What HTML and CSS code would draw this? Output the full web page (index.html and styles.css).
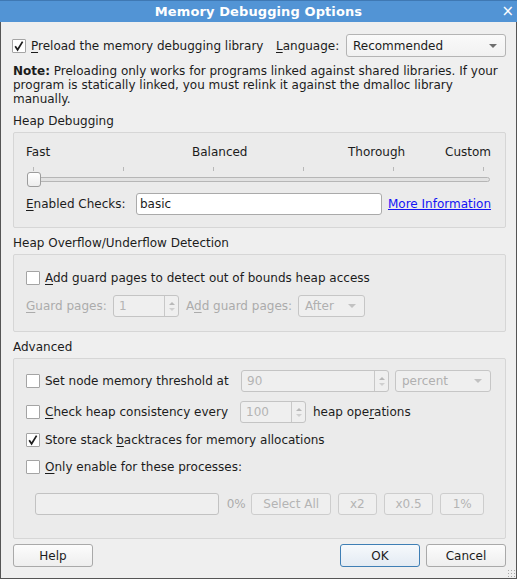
FILE: index.html
```html
<!DOCTYPE html>
<html lang="en">
<head>
    <meta charset="UTF-8">
    <title>Memory Debugging Options</title>
    <link rel="stylesheet" href="styles.css">
</head>
<body>
    <div class="titlebar">
        <span class="title">Memory Debugging Options</span>
        <span class="close">&#215;</span>
    </div>
    <div class="dialog">
        <div class="top-row">
            <span class="box checked"><svg width="12" height="12" viewBox="0 0 12 12"><path d="M2.2 6.2 L4.6 9.8 L9.6 1.6" fill="none" stroke="#1e1e1e" stroke-width="1.7"/></svg></span>
            <span class="preload-text"><u>P</u>reload the memory debugging library</span>
            <span class="lang-label"><u>L</u>anguage:</span>
            <div class="combo lang-combo"><span>Recommended</span><span class="arrow"></span></div>
        </div>

        <p class="note"><b>Note:</b> Preloading only works for programs linked against shared libraries. If your<br>program is statically linked, you must relink it against the dmalloc library<br>manually.</p>

        <div class="section-title">Heap Debugging</div>
        <div class="group heap-group">
            <div class="level-labels">
                <span class="lvl-fast">Fast</span>
                <span class="lvl-balanced">Balanced</span>
                <span class="lvl-thorough">Thorough</span>
                <span>Custom</span>
            </div>
            <div class="ticks">
                <span></span><span></span><span></span><span></span><span></span><span></span>
            </div>
            <div class="slider">
                <div class="groove"></div>
                <div class="handle"></div>
            </div>
            <div class="checks-row">
                <span class="checks-label"><u>E</u>nabled Checks:</span>
                <div class="text-input">basic</div>
                <a class="more-info" href="#">More Information</a>
            </div>
        </div>

        <div class="section-title">Heap Overflow/Underflow Detection</div>
        <div class="group guard-group">
            <div class="check-row">
                <span class="box"></span>
                <span><u>A</u>dd guard pages to detect out of bounds heap access</span>
            </div>
            <div class="guard-row disabled">
                <span class="guard-label"><u>G</u>uard pages:</span>
                <div class="spin guard-spin"><span class="val">1</span><span class="spin-btns"><i class="up"></i><i class="down"></i></span></div>
                <span class="guard-label2">A<u>d</u>d guard pages:</span>
                <div class="combo small-combo"><span>After</span><span class="arrow"></span></div>
            </div>
        </div>

        <div class="section-title">Advanced</div>
        <div class="group adv-group">
            <div class="adv-row first">
                <span class="box"></span>
                <span class="adv-label">Set node memory threshold at</span>
                <div class="spin threshold-spin disabled"><span class="val">90</span><span class="spin-btns"><i class="up"></i><i class="down"></i></span></div>
                <div class="combo unit-combo disabled"><span>percent</span><span class="arrow"></span></div>
            </div>
            <div class="adv-row second">
                <span class="box"></span>
                <span class="adv-label"><u>C</u>heck heap consistency every</span>
                <div class="spin ops-spin disabled"><span class="val">100</span><span class="spin-btns"><i class="up"></i><i class="down"></i></span></div>
                <span class="ops-text">heap ope<u>r</u>ations</span>
            </div>
            <div class="adv-row short third">
                <span class="box checked"><svg width="12" height="12" viewBox="0 0 12 12"><path d="M2.2 6.2 L4.6 9.8 L9.6 1.6" fill="none" stroke="#1e1e1e" stroke-width="1.7"/></svg></span>
                <span>Store stack <u>b</u>acktraces for memory allocations</span>
            </div>
            <div class="adv-row short fourth">
                <span class="box"></span>
                <span><u>O</u>nly enable for these processes:</span>
            </div>
            <div class="progress-row disabled">
                <div class="progress"></div>
                <span class="pct">0%</span>
                <button class="btn btn-select">Select All</button>
                <button class="btn btn-x2">x2</button>
                <button class="btn btn-half">x0.5</button>
                <button class="btn btn-one">1%</button>
            </div>
        </div>

        <div class="button-row">
            <button class="btn main-btn">Help</button>
            <span class="spacer"></span>
            <button class="btn main-btn ok">OK</button>
            <button class="btn main-btn">Cancel</button>
        </div>
        <div class="grip"></div>
    </div>
</body>
</html>
```

FILE: styles.css
```css
body {
    margin: 0;
    font-family: "DejaVu Sans", sans-serif;
    font-size: 12px;
    color: #1c1c1c;
    background: #efefef;
}

.titlebar {
    height: 22px;
    box-sizing: border-box;
    background: #5294d5;
    border-top: 1px solid #3f78b3;
    position: relative;
    display: flex;
    justify-content: center;
    align-items: center;
}

.title {
    color: #fff;
    font-weight: bold;
    font-size: 13px;
    letter-spacing: 0.1px;
}

.close {
    position: absolute;
    right: 3px;
    top: 0;
    color: #fff;
    font-size: 15px;
    line-height: 20px;
}

.dialog {
    height: 557px;
    box-sizing: border-box;
    border: 1px solid #555;
    border-top: none;
    padding: 12px 10px 0 12px;
    position: relative;
    white-space: nowrap;
}

u {
    text-decoration: underline;
    text-underline-offset: 2px;
}

/* checkbox */
.box {
    width: 14px;
    height: 14px;
    box-sizing: border-box;
    border: 1px solid #a4a4a4;
    border-radius: 1px;
    background: #fff;
    display: inline-flex;
    align-items: center;
    justify-content: center;
    flex: none;
}

.top-row {
    height: 23px;
    display: flex;
    align-items: center;
    margin-left: -1px;
}

.preload-text {
    margin-left: 5px;
    width: 245px;
}

.lang-label {
    width: 70px;
}

.combo {
    height: 23px;
    box-sizing: border-box;
    border: 1px solid #b4b4b4;
    border-radius: 3px;
    background: linear-gradient(#fafafa, #f1f1f1);
    display: flex;
    align-items: center;
    justify-content: space-between;
    padding: 0 8px 0 6px;
}

.lang-combo {
    width: 160px;
}

.arrow {
    width: 0;
    height: 0;
    border-left: 4px solid transparent;
    border-right: 4px solid transparent;
    border-top: 4px solid #6e6e6e;
}

.note {
    margin: 7px 0 0 0;
    line-height: 14px;
}

.section-title {
    margin-top: 8px;
    margin-bottom: 3px;
    line-height: 15px;
}

.group {
    border: 1px solid #d6d6d6;
    border-radius: 2px;
    background: #ebebeb;
}

.heap-group {
    padding: 12px 14px 12px 12px;
}

.level-labels {
    display: flex;
    line-height: 15px;
}

.lvl-fast {
    width: 166px;
}

.lvl-balanced {
    width: 156px;
}

.lvl-thorough {
    width: 97px;
}

.ticks {
    height: 5px;
    margin-top: 7px;
    padding-left: 7px;
    display: flex;
    gap: 89px;
}

.ticks span {
    width: 1px;
    height: 4px;
    background: #b8b8b8;
}

.slider {
    height: 15px;
    position: relative;
    margin-left: 1px;
    width: 463px;
}

.groove {
    position: absolute;
    left: 0;
    right: 0;
    top: 5px;
    height: 5px;
    box-sizing: border-box;
    border: 1px solid #b6b6b6;
    border-radius: 3px;
    background: #e2e2e2;
}

.handle {
    position: absolute;
    left: 0;
    top: 0;
    width: 14px;
    height: 15px;
    box-sizing: border-box;
    border: 1px solid #9c9c9c;
    border-radius: 3px;
    background: linear-gradient(#ffffff, #ededed);
}

.checks-row {
    margin-top: 6px;
    height: 22px;
    display: flex;
    align-items: center;
}

.checks-label {
    width: 110px;
}

.text-input {
    width: 246px;
    height: 22px;
    box-sizing: border-box;
    border: 1px solid #aaa;
    border-radius: 3px;
    background: #fff;
    padding-left: 3px;
    line-height: 20px;
}

.more-info {
    margin-left: 6px;
    color: #1414f5;
    text-decoration: underline;
}

.guard-group {
    padding: 12px 12px 14px 12px;
}

.check-row {
    height: 22px;
    display: flex;
    align-items: center;
    gap: 5px;
}

.disabled {
    color: #ababab;
}

.guard-row {
    margin-top: 6px;
    height: 22px;
    display: flex;
    align-items: center;
}

.guard-label {
    width: 87px;
}

.guard-label2 {
    margin-left: 7px;
    width: 112px;
}

.spin {
    height: 22px;
    box-sizing: border-box;
    border: 1px solid #c4c4c4;
    border-radius: 3px;
    background: #efefef;
    display: flex;
    align-items: stretch;
    color: #b4b4b4;
}

.spin .val {
    flex: 1;
    padding-left: 5px;
    line-height: 20px;
}

.spin-btns {
    width: 13px;
    border-left: 1px solid #c8c8c8;
    display: flex;
    flex-direction: column;
    align-items: center;
    justify-content: center;
    gap: 3px;
}

.spin-btns i {
    width: 0;
    height: 0;
    border-left: 3px solid transparent;
    border-right: 3px solid transparent;
}

.spin-btns .up {
    border-bottom: 3px solid #b8b8b8;
}

.spin-btns .down {
    border-top: 3px solid #cfcfcf;
}

.guard-spin {
    width: 66px;
}

.small-combo {
    width: 67px;
    height: 22px;
    border-color: #c6c6c6;
    background: #efefef;
    color: #b0b0b0;
}

.small-combo .arrow,
.unit-combo .arrow {
    border-top-color: #c2c2c2;
}

.adv-group {
    padding: 11px 14px 23px 12px;
}

.adv-row {
    height: 22px;
    display: flex;
    align-items: center;
}

.adv-row .box {
    margin-right: 5px;
}

.adv-row.short {
    height: 18px;
}

.second {
    margin-top: 9px;
}

.third {
    margin-top: 8px;
}

.fourth {
    margin-top: 9px;
}

.adv-label {
    width: 196px;
}

.second .adv-label {
    width: 195px;
}

.threshold-spin {
    width: 148px;
}

.unit-combo {
    margin-left: 6px;
    width: 96px;
    height: 22px;
    border-color: #c6c6c6;
    background: #efefef;
    color: #b0b0b0;
}

.ops-spin {
    width: 66px;
}

.ops-text {
    margin-left: 7px;
}

.progress-row {
    margin-top: 17px;
    height: 22px;
    display: flex;
    align-items: center;
    padding-left: 9px;
}

.progress {
    width: 185px;
    height: 22px;
    box-sizing: border-box;
    border: 1px solid #c2c2c2;
    border-radius: 3px;
    background: #efefef;
}

.pct {
    margin-left: 8px;
    width: 25px;
}

.btn {
    height: 22px;
    box-sizing: border-box;
    border: 1px solid #a9a9a9;
    border-radius: 3px;
    background: linear-gradient(#fcfcfc, #eeeeee);
    font-family: "DejaVu Sans", sans-serif;
    font-size: 12px;
    color: #1c1c1c;
    padding: 0;
}

.progress-row .btn {
    border-color: #cdcdcd;
    background: #efefef;
    color: #b4b4b4;
    margin-right: 7px;
}

.btn-select {
    width: 80px;
}

.btn-x2 {
    width: 39px;
}

.btn-half {
    width: 50px;
}

.btn-one {
    width: 44px;
}

.button-row {
    margin-top: 5px;
    display: flex;
    gap: 6px;
}

.main-btn {
    width: 80px;
    height: 23px;
}

.spacer {
    flex: 1;
}

.ok {
    border-color: #3f7fb5;
    background: linear-gradient(#f6f9fc, #e3ebf3);
}

.grip {
    position: absolute;
    right: 1px;
    bottom: 1px;
    width: 8px;
    height: 8px;
    background-image: radial-gradient(circle, #a8a8a8 0.7px, transparent 0.8px);
    background-size: 3px 3px;
}
```
